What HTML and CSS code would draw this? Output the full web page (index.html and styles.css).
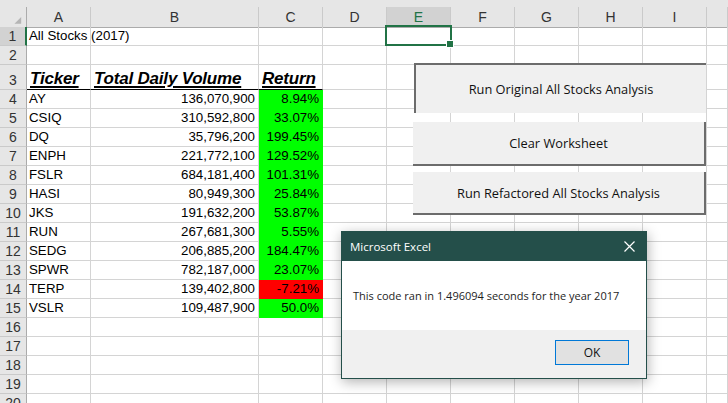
FILE: index.html
```html
<!DOCTYPE html>
<html>
<head>
<meta charset="utf-8">
<link rel="stylesheet" href="styles.css">
</head>
<body>
<div class="app">
  <div class="topband"></div>
  <div class="sheet">
    <div class="row hdr">
      <div class="corner"><svg width="27" height="20" viewBox="0 0 27 20"><polygon points="15,17 22,17 22,10" fill="#b5b5b5"/></svg></div>
      <div>A</div><div>B</div><div>C</div><div>D</div><div class="selcol">E</div><div>F</div><div>G</div><div>H</div><div>I</div><div></div>
    </div>
    <div class="row">
      <div class="rh selrow">1</div><div class="txt">All Stocks (2017)</div><div></div><div></div><div></div><div></div><div></div><div></div><div></div><div></div><div></div>
    </div>
    <div class="row">
      <div class="rh">2</div><div></div><div></div><div></div><div></div><div></div><div></div><div></div><div></div><div></div><div></div>
    </div>
    <div class="row tall">
      <div class="rh">3</div><div class="th">Ticker</div><div class="th">Total Daily Volume</div><div class="th">Return</div><div></div><div></div><div></div><div></div><div></div><div></div><div></div>
    </div>
    <div class="row">
      <div class="rh">4</div><div>AY</div><div class="num">136,070,900</div><div class="num up">8.94%</div><div></div><div></div><div></div><div></div><div></div><div></div><div></div>
    </div>
    <div class="row">
      <div class="rh">5</div><div>CSIQ</div><div class="num">310,592,800</div><div class="num up">33.07%</div><div></div><div></div><div></div><div></div><div></div><div></div><div></div>
    </div>
    <div class="row">
      <div class="rh">6</div><div>DQ</div><div class="num">35,796,200</div><div class="num up">199.45%</div><div></div><div></div><div></div><div></div><div></div><div></div><div></div>
    </div>
    <div class="row">
      <div class="rh">7</div><div>ENPH</div><div class="num">221,772,100</div><div class="num up">129.52%</div><div></div><div></div><div></div><div></div><div></div><div></div><div></div>
    </div>
    <div class="row">
      <div class="rh">8</div><div>FSLR</div><div class="num">684,181,400</div><div class="num up">101.31%</div><div></div><div></div><div></div><div></div><div></div><div></div><div></div>
    </div>
    <div class="row">
      <div class="rh">9</div><div>HASI</div><div class="num">80,949,300</div><div class="num up">25.84%</div><div></div><div></div><div></div><div></div><div></div><div></div><div></div>
    </div>
    <div class="row">
      <div class="rh">10</div><div>JKS</div><div class="num">191,632,200</div><div class="num up">53.87%</div><div></div><div></div><div></div><div></div><div></div><div></div><div></div>
    </div>
    <div class="row">
      <div class="rh">11</div><div>RUN</div><div class="num">267,681,300</div><div class="num up">5.55%</div><div></div><div></div><div></div><div></div><div></div><div></div><div></div>
    </div>
    <div class="row">
      <div class="rh">12</div><div>SEDG</div><div class="num">206,885,200</div><div class="num up">184.47%</div><div></div><div></div><div></div><div></div><div></div><div></div><div></div>
    </div>
    <div class="row">
      <div class="rh">13</div><div>SPWR</div><div class="num">782,187,000</div><div class="num up">23.07%</div><div></div><div></div><div></div><div></div><div></div><div></div><div></div>
    </div>
    <div class="row">
      <div class="rh">14</div><div>TERP</div><div class="num">139,402,800</div><div class="num down">-7.21%</div><div></div><div></div><div></div><div></div><div></div><div></div><div></div>
    </div>
    <div class="row">
      <div class="rh">15</div><div>VSLR</div><div class="num">109,487,900</div><div class="num up">50.0%</div><div></div><div></div><div></div><div></div><div></div><div></div><div></div>
    </div>
    <div class="row">
      <div class="rh">16</div><div></div><div></div><div></div><div></div><div></div><div></div><div></div><div></div><div></div><div></div>
    </div>
    <div class="row">
      <div class="rh">17</div><div></div><div></div><div></div><div></div><div></div><div></div><div></div><div></div><div></div><div></div>
    </div>
    <div class="row">
      <div class="rh">18</div><div></div><div></div><div></div><div></div><div></div><div></div><div></div><div></div><div></div><div></div>
    </div>
    <div class="row">
      <div class="rh">19</div><div></div><div></div><div></div><div></div><div></div><div></div><div></div><div></div><div></div><div></div>
    </div>
    <div class="row">
      <div class="rh">20</div><div></div><div></div><div></div><div></div><div></div><div></div><div></div><div></div><div></div><div></div>
    </div>
  </div>

  <div class="selection"><span class="handle"></span></div>

  <div class="btn pressed b1">Run Original All Stocks Analysis</div>
  <div class="btn raised b2">Clear Worksheet</div>
  <div class="btn raised b3">Run Refactored All Stocks Analysis</div>

  <div class="dialog">
    <div class="dlg-title">
      <span>Microsoft Excel</span>
      <svg class="close" width="11" height="11" viewBox="0 0 11 11"><path d="M0.5 0.5 L10.5 10.5 M10.5 0.5 L0.5 10.5" stroke="#ffffff" stroke-width="1.2" fill="none"/></svg>
    </div>
    <div class="dlg-msg">This code ran in 1.496094 seconds for the year 2017</div>
    <div class="dlg-foot"><div class="ok">OK</div></div>
  </div>
</div>
</body>
</html>
```

FILE: styles.css
```css
html, body {
  margin: 0;
  padding: 0;
  background: #ffffff;
  overflow: hidden;
}

.app {
  position: relative;
  width: 728px;
  height: 403px;
  overflow: hidden;
  font-family: "Liberation Sans", Arial, sans-serif;
  color: #000;
}

.topband {
  height: 7px;
  background: #e6e6e6;
}

.row {
  display: grid;
  grid-template-columns: 27px 64px 168px 64px 64px 64px 64px 64px 64px 64px 21px;
  height: 19px;
}

.row > div {
  box-sizing: border-box;
  border-right: 1px solid #d4d4d4;
  border-bottom: 1px solid #d4d4d4;
  font-size: 13.3px;
  line-height: 18px;
  padding: 0 2px;
  white-space: nowrap;
  display: flex;
  align-items: flex-end;
  min-width: 0;
}

.row.hdr {
  height: 20px;
  background: #e6e6e6;
}

.row.hdr > div {
  border-right-color: #cacaca;
  border-bottom-color: #ababab;
  justify-content: center;
  align-items: center;
  color: #333;
  font-size: 14px;
  padding: 0;
}

.row.hdr > .corner {
  border-right-color: #ababab;
  align-items: stretch;
}

.row.hdr > .selcol {
  background: #d2d2d2;
  color: #217346;
}

.row > .rh {
  background: #e6e6e6;
  border-right-color: #ababab;
  border-bottom-color: #cacaca;
  justify-content: center;
  color: #333;
  font-size: 14px;
  padding: 0;
}

.row > .rh.selrow {
  background: #d2d2d2;
  border-right: 2px solid #217346;
}

.row.tall {
  height: 25px;
}

.row.tall > div:not(.rh) {
  border-bottom-color: #000;
}

.row.tall > div:nth-child(n+5) {
  border-bottom-color: #d4d4d4;
}

.row.tall > .th {
  font-size: 17px;
  font-weight: bold;
  font-style: italic;
  line-height: 20px;
  padding-left: 3px;
  text-decoration: underline;
  text-decoration-thickness: 2px;
  text-underline-offset: 2px;
  letter-spacing: -0.2px;
}

.row > .num {
  justify-content: flex-end;
  padding-right: 3px;
}

.row > .up {
  background: #00ff00;
  border-right-color: #00ff00;
  border-bottom-color: #00ff00;
}

.row > .down {
  background: #ff0000;
  border-right-color: #ff0000;
  border-bottom-color: #ff0000;
}

.selection {
  position: absolute;
  left: 385px;
  top: 25px;
  width: 67px;
  height: 21px;
  box-sizing: border-box;
  border: 2px solid #217346;
}

.selection .handle {
  position: absolute;
  right: -3px;
  bottom: -3px;
  width: 6px;
  height: 6px;
  background: #217346;
  border: 1px solid #ffffff;
  box-sizing: content-box;
  margin: -1px;
}

.btn {
  position: absolute;
  box-sizing: border-box;
  background: #f0f0f0;
  display: flex;
  align-items: center;
  justify-content: center;
  font-family: "Open Sans", "Noto Sans", sans-serif;
  font-size: 12.8px;
  color: #111;
}

.btn.pressed {
  border-top: 2px solid #6c6c6c;
  border-left: 2px solid #6c6c6c;
}

.btn.raised {
  border-right: 2px solid #6c6c6c;
  border-bottom: 2px solid #6c6c6c;
}

.b1 {
  left: 414px;
  top: 63px;
  width: 292px;
  height: 50px;
}

.b2 {
  left: 413px;
  top: 122px;
  width: 293px;
  height: 44px;
}

.b3 {
  left: 413px;
  top: 172px;
  width: 293px;
  height: 43px;
}

.dialog {
  position: absolute;
  left: 341px;
  top: 231px;
  width: 306px;
  height: 148px;
  box-sizing: border-box;
  border: 1px solid #244f4a;
  background: #ffffff;
  box-shadow: 1px 3px 12px rgba(0, 0, 0, 0.3);
  display: flex;
  flex-direction: column;
  font-family: "Open Sans", "Noto Sans", sans-serif;
}

.dlg-title {
  height: 29px;
  flex: none;
  background: #244f4a;
  color: #ffffff;
  font-size: 11.5px;
  display: flex;
  align-items: center;
  justify-content: space-between;
  padding: 0 11px 0 8px;
}

.close {
  display: block;
}

.dlg-msg {
  height: 69px;
  flex: none;
  display: flex;
  align-items: center;
  padding-left: 11px;
  font-size: 11px;
  color: #1e1e1e;
}

.dlg-foot {
  flex: 1;
  background: #f0f0f0;
  display: flex;
  justify-content: flex-end;
  align-items: flex-start;
  padding: 10px 17px 0 0;
}

.ok {
  width: 74px;
  height: 25px;
  box-sizing: border-box;
  border: 1px solid #0078d7;
  background: #e1e1e1;
  display: flex;
  align-items: center;
  justify-content: center;
  font-size: 12px;
  color: #111;
}
```
